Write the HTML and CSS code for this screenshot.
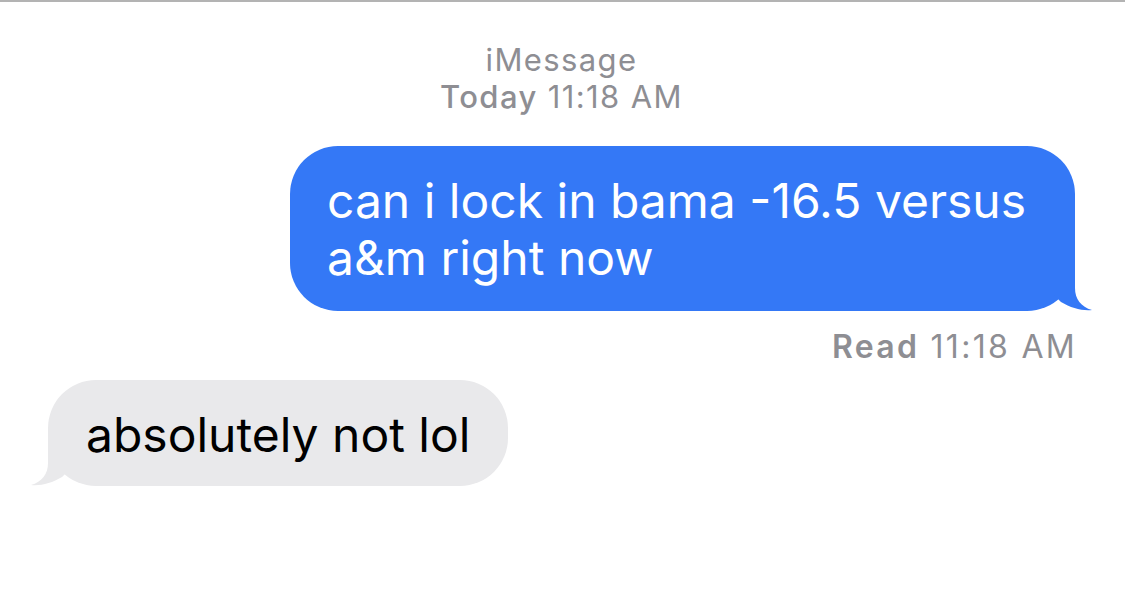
FILE: index.html
```html
<!DOCTYPE html>
<html>
<head>
<meta charset="utf-8">
<link rel="stylesheet" href="styles.css">
</head>
<body>
<div class="thread">
  <div class="stamp">
    <div class="service">iMessage</div>
    <div class="when"><span class="day">Today</span> 11:18 AM</div>
  </div>
  <div class="row out">
    <div class="bubble sent">can i lock in bama -16.5 versus a&amp;m right now<svg class="tail tail-right" viewBox="0 0 44 50" width="44" height="50"><path d="M26,0 L26,26 C26,37 32,45 43,48 C33,49 22,46 12,40 L0,28 L0,0 Z" fill="#3478F6"/></svg></div>
  </div>
  <div class="receipt"><span class="read">Read</span> 11:18 AM</div>
  <div class="row in">
    <div class="bubble received">absolutely not lol<svg class="tail tail-left" viewBox="0 0 44 50" width="44" height="50"><path d="M18,0 L18,26 C18,37 12,45 1,48 C11,49 22,46 32,40 L44,28 L44,0 Z" fill="#E9E9EB"/></svg></div>
  </div>
</div>
</body>
</html>
```
FILE: styles.css
```css
html, body {
  margin: 0;
  padding: 0;
  background: #ffffff;
}
body {
  width: 1125px;
  height: 596px;
  overflow: hidden;
  border-top: 2px solid #b3b3b3;
  box-sizing: border-box;
  font-family: Inter, "Liberation Sans", sans-serif;
}
.thread {
  display: flex;
  flex-direction: column;
  padding: 0 50px 0 48px;
}
.stamp {
  display: flex;
  flex-direction: column;
  align-items: center;
  color: #8e8e93;
  font-size: 31px;
  line-height: 37px;
  letter-spacing: 1.4px;
  padding-top: 39px;
}
.day {
  font-weight: 500;
}
.row {
  display: flex;
}
.row.out {
  justify-content: flex-end;
  margin-top: 31px;
}
.row.in {
  justify-content: flex-start;
  margin-top: 15px;
}
.bubble {
  position: relative;
  font-size: 48px;
  line-height: 57px;
  border-radius: 48px;
}
.bubble.sent {
  background: #3478f6;
  color: #ffffff;
  width: 711px;
  padding: 26px 37px 25px 37px;
}
.bubble.received {
  background: #e9e9eb;
  color: #000000;
  padding: 26px 38px 23px 38px;
}
.tail {
  position: absolute;
  bottom: -1px;
}
.tail-right {
  right: -18px;
}
.tail-left {
  left: -18px;
}
.receipt {
  align-self: flex-end;
  color: #8e8e93;
  font-size: 32px;
  line-height: 37px;
  letter-spacing: 2.3px;
  margin-top: 17px;
  margin-right: -2px;
}
.read {
  font-weight: 600;
}
```
